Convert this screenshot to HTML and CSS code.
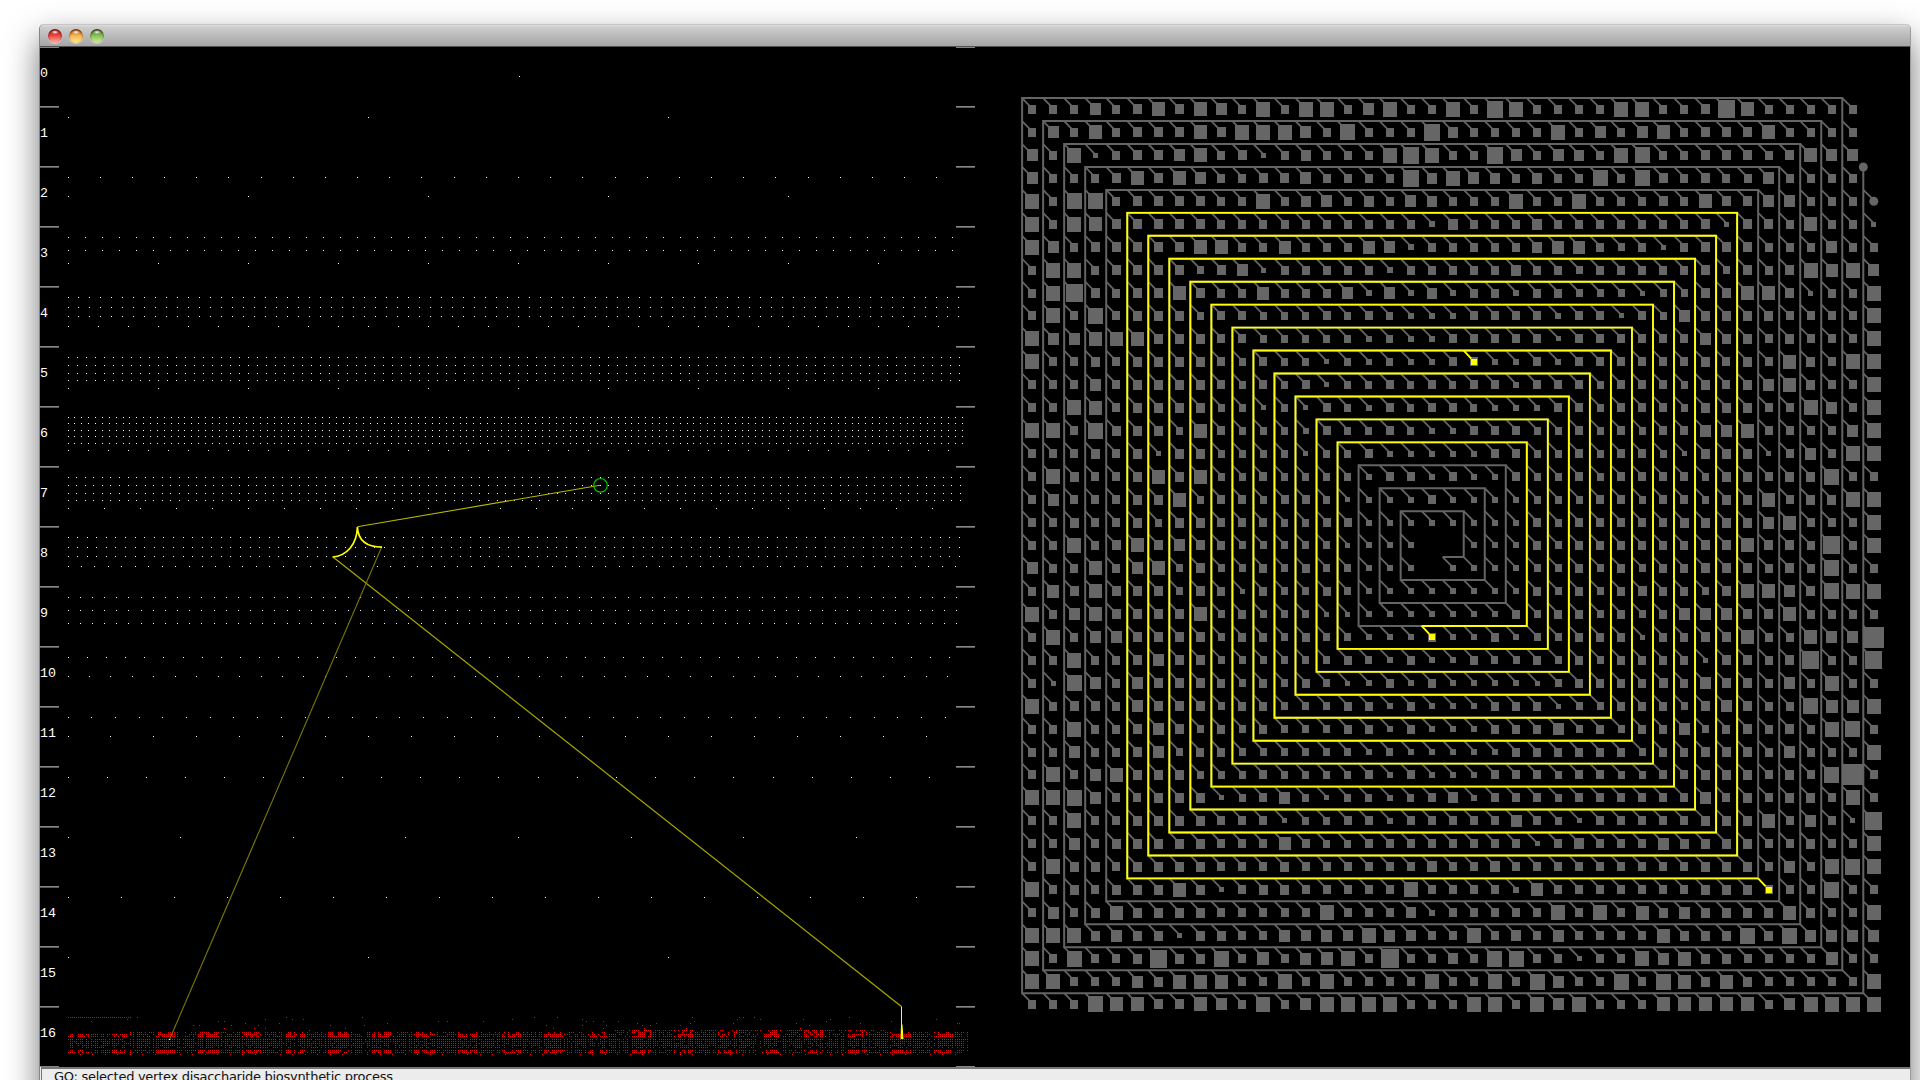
FILE: index.html
```html
<!DOCTYPE html>
<html lang="en">
<head>
<meta charset="utf-8">
<title>GO graph viewer</title>
<link rel="stylesheet" href="styles.css">
</head>
<body>
<main class="window">
  <header class="titlebar">
    <span class="light light-close"></span>
    <span class="light light-min"></span>
    <span class="light light-zoom"></span>
  </header>
  <div class="views">
    <section class="levels">
      <svg id="levels" class="plot" viewBox="40 47 936 1020" width="936" height="1020"></svg>
      <ol class="labels" id="labels"></ol>
    </section>
    <section class="spiral">
      <svg id="spiral" viewBox="976 47 934 1020" width="934" height="1020"></svg>
    </section>
  </div>
  <footer class="status"><span class="status-text">GO: selected vertex disaccharide biosynthetic process</span></footer>
</main>
<script src="main.js"></script>
</body>
</html>
```
FILE: styles.css
```css
* { box-sizing: border-box; }
html, body { height: 100%; }
body {
  margin: 0;
  overflow: hidden;
  background: #fff;
  font-family: "DejaVu Sans", sans-serif;
}
.window {
  width: 1872px;
  height: 1120px;
  margin: 24px 0 0 39px;
  display: flex;
  flex-direction: column;
  border-left: 1px solid #858585;
  border-right: 1px solid #9a9a9a;
  border-radius: 5px 5px 0 0;
  background: #ececec;
  box-shadow: 0 14px 32px rgba(0, 0, 0, .55);
}
.titlebar {
  flex: none;
  height: 23px;
  display: flex;
  align-items: center;
  gap: 7px;
  padding-left: 8px;
  border-top: 1px solid #c6c6c6;
  border-bottom: 1px solid #515151;
  border-radius: 5px 5px 0 0;
  background: linear-gradient(#dedede 0, #cdcdcd 2px, #a5a5a5 100%);
}
.light {
  width: 14px;
  height: 14px;
  border-radius: 50%;
  box-shadow: inset 0 1px 2px rgba(50, 0, 0, .75), 0 1px 0 rgba(255, 255, 255, .45);
}
.light-close { background: radial-gradient(ellipse 4px 2px at 50% 22%, #fff 0, rgba(255,255,255,0) 100%), linear-gradient(#a02720 0, #ed4039 45%, #ffb5b0 100%); }
.light-min { background: radial-gradient(ellipse 4px 2px at 50% 22%, #fff 0, rgba(255,255,255,0) 100%), linear-gradient(#b5531c 0, #f5b04a 45%, #fff089 100%); }
.light-zoom { background: radial-gradient(ellipse 4px 2px at 50% 22%, #fff 0, rgba(255,255,255,0) 100%), linear-gradient(#3c7425 0, #83bd53 45%, #d5f0a0 100%); }
.views {
  flex: none;
  height: 1020px;
  display: flex;
  background: #000;
}
.levels { position: relative; width: 936px; }
.plot { position: absolute; inset: 0; }
.spiral { width: 934px; }
svg { display: block; }
.labels {
  margin: 0;
  padding: 0;
  list-style: none;
  font: 13.33px/16px "Liberation Mono", monospace;
  color: #fff;
}
.labels li { height: 60px; padding-top: 19px; }
.status {
  flex: 1;
  margin-left: 1px;
  padding: 0 0 0 12px;
  border-top: 2px solid #777;
  border-left: 1px solid #777;
  color: #111;
  font-size: 13px;
  line-height: 15px;
}
.status-text { letter-spacing: -.28px; }
.tick-light { fill: #868686; }
.tick-dark { fill: #5a5a5a; }
.dot { fill: #fff; }
.leaf { fill: #f00000; }
.edge { fill: none; stroke: #b8b800; stroke-width: 1.1; }
.edge-soft { stroke: #a8a800; stroke-width: 1.2; }
.edge-dim { stroke: #787800; }
.edge-bright { stroke: #ff0; stroke-width: 1.7; }
.beam { fill: #ff0; }
.ring { fill: none; stroke: #00c800; stroke-width: 1.2; }
.path { fill: none; stroke: #646464; stroke-width: 2; }
.stem { fill: none; stroke: #646464; stroke-width: 1.8; }
.node { fill: #666; }
.hot { fill: none; stroke: #ff0; stroke-width: 1.9; }
.hot-node { fill: #ff0; }
```
FILE: main.js
```js
const dot = (x, y, w = 1, h = 1) => `M${x} ${y}h${w}v${h}h${-w}z`;
const el = (cls, d, crisp) => `<path class="${cls}" d="${d}"${crisp ? ' shape-rendering="crispEdges"' : ''}/>`;

/* Level view: each entry is [y, number of vertices spread over the 900px row]. */
const rows = [
  [117,3],[177,28],[196,5],[237,53],[250,53],[263,10],
  [297,82],[307,82],[316,82],[326,30],
  [357,100],[365,100],[373,100],[380,100],[388,10],
  [417,131],[423,131],[430,131],[436,131],[443,131],[450,45],
  [477,105],[485,105],[493,105],[500,105],[508,25],
  [537,94],[547,94],[556,94],[566,67],
  [597,74],[610,74],[623,74],[657,47],[676,42],
  [717,38],[736,21],[777,23],[837,8],[897,17],[957,3]
];
let white = dot(519, 76);
for (const [y, n] of rows)
  for (let i = 0; i < n; i++) white += dot(Math.floor(68 + i * 901 / n), y);

let light = dot(40, 47, 19), dark = '';
light += dot(956, 47, 19);
for (let k = 1; k <= 17; k++)
  for (const x of [40, 956]) { light += dot(x, 46 + 60 * k, 19); dark += dot(x, 47 + 60 * k, 19); }

let seed = 11;
const rnd = () => (seed = (seed * 16807) % 2147483647) / 2147483647;
let red = '';
for (let x = 68; x < 132; x += 2) red += dot(x, 1017);
red += dot(137, 1017);
const band = [[1032,.5],[1034,.76],[1036,.78],[1039,.88],[1041,.88],[1043,.84],[1045,.84],[1047,.62],[1050,.8],[1052,.74]];
for (let i = 0; i < 430; i++) {
  const x = Math.floor(68 + i * 2.097), gap = rnd() < .16 ? .4 : 1.06;
  for (const [y, p] of band) {
    if (y === 1032 && x < 130) continue;
    if (rnd() < p * gap) red += dot(x, y);
  }
  if (x > 612 && x < 885 && rnd() < .7) red += dot(x, 1030);
}
for (let i = 0; i < 71; i++) red += dot(Math.floor(80 + i * 12.5), 1054);
for (const [x, y] of [[91,1021],[127,1019],[193,1025],[199,1025],[218,1021],[224,1021],[224,1028],[231,1025],[245,1023],[254,1028],[258,1025],[265,1019],[265,1028],[279,1023],[286,1017],[292,1019],[303,1019],[309,1030],[330,1025],[345,1028],[362,1017],[364,1025],[387,1023],[438,1021],[447,1021],
  [483,1021],[512,1019],[534,1017],[546,1025],[553,1028],[557,1017],[582,1019],[586,1021],[582,1025],[593,1021],[603,1021],[606,1025],[603,1028],[618,1021],[637,1023],[642,1025],[644,1028],[650,1025],[656,1023],[680,1025],[686,1028],[690,1023],[692,1017],[694,1021],[733,1023],[737,1019],[739,1017],[743,1017],[754,1017],[760,1019],[796,1023],[800,1028],[803,1019],[809,1025],[826,1021],[830,1019],[849,1017],[860,1023],[891,1021],[936,1019],[957,1023],[959,1023]])
  red += dot(x, y);

document.getElementById('levels').innerHTML =
  el('tick-light', light, 1) + el('tick-dark', dark, 1) + el('dot', white, 1) + el('leaf', red, 1) +
  el('edge', 'M357.3 526.8L600 485.2') +
  el('edge edge-soft', 'M333 557L901.4 1006.5') +
  el('edge edge-dim', 'M381.7 547L169.5 1039.5') +
  el('edge edge-bright', 'M332.5 557C347 556 357 544 357.4 527M357.4 527C358 540 366 547 382 547.2') +
  el('beam', 'M901 1006.5h1v18h.5l1 14.5h-3l.5-14.5z') +
  '<circle class="ring" cx="600.5" cy="485.3" r="6.8"/>' + el('dot', dot(600, 485) + dot(169, 1039), 1);

document.getElementById('labels').innerHTML =
  Array.from({ length: 17 }, (_, i) => `<li>${i}</li>`).join('');

/* Spiral view: one character per vertex, its width in base 36; "-" none, "Y" selected, "O" round. */
const cells = `
888b89d9db8e8ee8be88e8ge8888ee889hd88888-
8b8d8999d9eeeb8f888ga8888e8b8bd8999d8888-
b8e5899bd8958a888ege88gb8ba8ef8899989dbb-
b8889d9db8899b8888gaeba8a88f8f98988b8888-
e8ff899998 8e8ab8a8ba888e88e88898d99bb888O
e8ed9999988888888886a888a88888889599 8d885
eb899999dd88c888cb688888acc8785 89998 88b88
8ee899997 9b588888688888a8878888897989 eceb
8eh9899d988c888b6b6a68868877757799dd9588e
8e8f899978877787876668888688587b99998888e
ebbddd9998877777676688888588888 8b998 9888e
e88989999878775767668Y668688 88889898d98ee
888b89999878785778787886888788879 89bd988e
88ed8999977575876878876668878887999 88eb8e
ee8f9997d877768778766888778787 88bbd8888be
8889895997777577866666887787887599958b8ee
8e988 9d9d77877776886866877878888799899f88
8b88899d78878875666866667778878879 9d899ee
8898897998887788666666668788888999 9bd888e
88e89d9b9877777566 6--666878888889 9d998h8e
b88d8bd7977878776 66-66667787878899989 8f88
8c9d99979858778766666666878789887 9ddb9fee
e8bd9999d787775566666668788787 8bbb99d8888
8e8bb999978878776 66Y6686778885 8899d88dbbk
88e889b997777778768668778787888859989h88h
85fb8b999878787568686666578888 98b998b8e88
e8998b999788777886866688857788879b988fcce
88e889b97878777886866688 8b787 88b789898ef8
88b889b78877777767 66666888888788999 8b888e
8e8bd9997778777786866688878877 889998 98fk8
eefb8899957 8b75776 78a6888788888 8b8989 98e8
88e889999888577886888 8 8b8758888 8999d8b85h
88b8999998 88c8778888888858a888b99998 8988e
8e9989999888988888 8a88a8888888 88999 8b8efe
e89899 9d95899888 88e8888 6c8888888999Y88f88
8b89d999988888e888a688888e8e8d9b9999d988e
eee9b99599 88baba eba88e8a8b8888d999f9fbbbb
e8f889h99f8c8bce8i88a8ff885 88ebd998888c88
ee888b9ddd88e8e8888e88e8fb88f8fd9d988888e
888fdd99db8e8beeee888ee8ebe888ddddd8beeee
`.trim().split('\n').map(r => r.replace(/ /g, ''));

const X = i => +(1022.1 + 21.03 * i).toFixed(2), Y = j => +(98.1 + 22.95 * j).toFixed(2);
const points = [[40, 3], [40, 39], [0, 39]];
for (let k = 0; k <= 18; k++) {
  points.push([k, k], [39 - k, k], [39 - k, 38 - k]);
  if (k < 18) points.push([k + 1, 38 - k]);
}
points.push([20, 20]);
const line = a => 'M' + a.map(([i, j]) => X(i) + ' ' + Y(j)).join('L');

const hot = [[35, 34], [5, 34]];
for (let k = 5; k <= 15; k++) {
  hot.push([k, k], [39 - k, k], [39 - k, 38 - k]);
  hot.push(k < 15 ? [k + 1, 38 - k] : [19, 23]);
}

let stems = '', hotStems = '', nodes = '', hotNodes = '', round = '';
cells.forEach((row, j) => [...row].forEach((c, i) => {
  if (c === '-') return;
  const cx = 1032 + 21.045 * i, cy = 109.4 + 22.95 * j;
  const box = (w, h) => dot(Math.round(cx - w / 2), Math.round(cy - h / 2), w, h);
  const stem = `M${X(i)} ${Y(j)}L${cx.toFixed(2)} ${(cy - 1).toFixed(2)}`;
  if (c === 'O') {
    round += `<circle class="node" cx="${cx.toFixed(1)}" cy="${cy.toFixed(1)}" r="4.5"/>`;
    stems += stem;
    return;
  }
  if (c === 'Y') {
    hotStems += `M${X(i)} ${Y(j)}l7.5 8`;
    nodes += box(8, 9);
    hotNodes += box(6, 6);
    return;
  }
  const w = parseInt(c, 36);
  stems += stem;
  nodes += box(w, w > 6 ? w + 1 : w);
}));

document.getElementById('spiral').innerHTML =
  el('path', line(points)) + el('stem', stems) + el('hot', line(hot)) +
  el('node', nodes, 1) + round + `<circle class="node" cx="${X(40)}" cy="${Y(3)}" r="4.5"/>` +
  el('hot', hotStems) + el('hot-node', hotNodes, 1);
```
